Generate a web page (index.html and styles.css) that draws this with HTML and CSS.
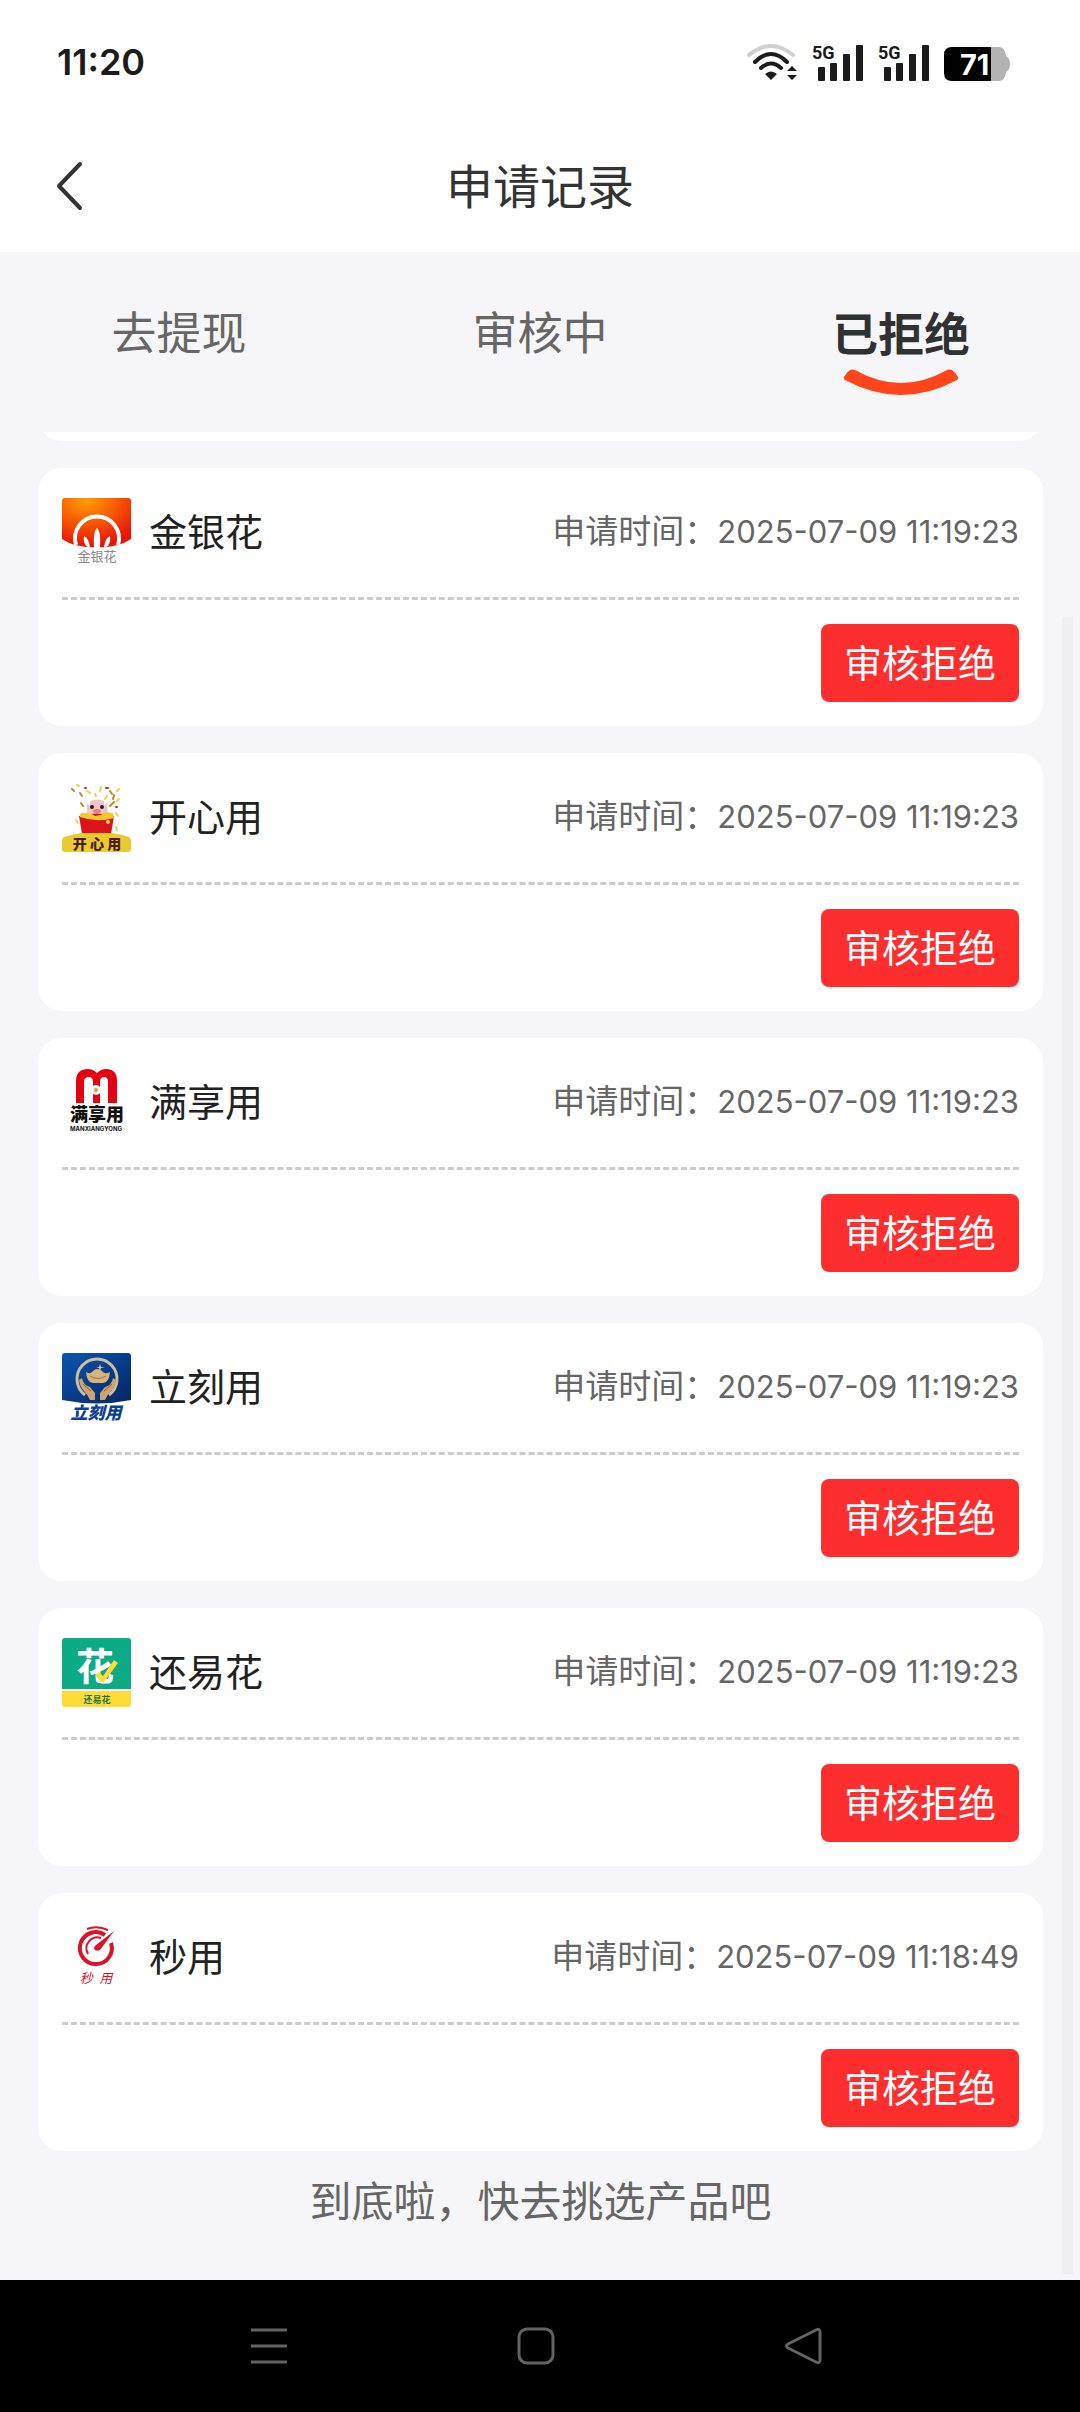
FILE: index.html
```html
<!DOCTYPE html>
<html lang="zh-CN">
<head>
    <meta charset="UTF-8">
    <meta name="viewport" content="width=device-width, initial-scale=1.0">
    <title>申请记录</title>
    <link rel="stylesheet" href="styles.css">
</head>
<body>

    <div class="status-bar">
        <span class="clock">11:20</span>
        <div class="status-icons">
            <svg class="wifi" width="52" height="38" viewBox="0 0 52 38" fill="none" stroke-linecap="round">
                <path d="M3 12Q25 -6 47 12" stroke="#d0d0d0" stroke-width="4"/>
                <path d="M9 19Q25 3 41 19" stroke="#1c1c1c" stroke-width="4"/>
                <path d="M15 25Q25 16 35 25" stroke="#1c1c1c" stroke-width="4"/>
                <path d="M19 31Q25 26 31 31L25 37Z" fill="#1c1c1c"/>
                <path d="M46 23L51 28H41ZM46 37L51 32H41Z" fill="#1c1c1c"/>
            </svg>
            <svg class="signal" width="52" height="38" viewBox="0 0 52 38" fill="#1c1c1c">
                <text class="net-text" x="0" y="16">5G</text>
                <rect x="6" y="24" width="7" height="14" rx="1"/>
                <rect x="18" y="20" width="7" height="18" rx="1"/>
                <rect x="31" y="11" width="7" height="27" rx="1"/>
                <rect x="44" y="2" width="7" height="36" rx="1"/>
            </svg>
            <svg class="signal" width="52" height="38" viewBox="0 0 52 38" fill="#1c1c1c">
                <text class="net-text" x="0" y="16">5G</text>
                <rect x="6" y="24" width="7" height="14" rx="1"/>
                <rect x="18" y="20" width="7" height="18" rx="1"/>
                <rect x="31" y="11" width="7" height="27" rx="1"/>
                <rect x="44" y="2" width="7" height="36" rx="1"/>
            </svg>
            <svg class="battery" width="66" height="38" viewBox="0 0 66 38">
                <path d="M47 4H55Q61 4 62 13Q66 15 66 21Q66 27 62 29Q61 38 55 38H47Z" fill="#b3b3b3"/>
                <path d="M8 4H47V38H8Q0 38 0 30V12Q0 4 8 4Z" fill="#000"/>
                <text class="battery-text" x="16" y="32">71</text>
            </svg>
        </div>
    </div>

    <header class="nav-bar">
        <button class="back-btn" aria-label="返回">
            <svg width="28" height="50" viewBox="0 0 28 50" fill="none" stroke="#333" stroke-width="4" stroke-linecap="round" stroke-linejoin="round"><path d="M24 3L3 25L24 47"/></svg>
        </button>
        <h1 class="nav-title">申请记录</h1>
    </header>

    <nav class="tabs">
        <button class="tab">去提现</button>
        <button class="tab">审核中</button>
        <button class="tab active">已拒绝
            <svg class="tab-smile" width="116" height="28" viewBox="0 0 116 28" fill="#ff4519"><path d="M7 1Q9 0 12 1Q58 27 104 1Q107 0 109 1Q113 4 115 8Q116 10 114 11Q58 41 2 11Q0 10 1 8Q3 4 7 1Z"/></svg>
        </button>
    </nav>

    <main class="list">
        <div class="scroll-thumb"></div>
        <div class="card-peek"><div class="card"></div></div>

        <article class="card">
            <div class="card-head">
                <svg class="logo" viewBox="0 0 69 69">
                    <defs>
                        <radialGradient id="jyh" cx="0.35" cy="0.05" r="0.9">
                            <stop offset="0" stop-color="#ff9d00"/>
                            <stop offset="0.5" stop-color="#f75a00"/>
                            <stop offset="1" stop-color="#e81405"/>
                        </radialGradient>
                    </defs>
                    <path d="M3 0H66Q69 0 69 3V41Q63 45 56 47Q35 52 13 47Q6 45 0 41V3Q0 0 3 0Z" fill="url(#jyh)"/>
                    <path d="M14 47A22 22 0 1 1 56 47" fill="none" stroke="#fff" stroke-width="4"/>
                    <path d="M35 30Q39 33 38 50H32Q31 33 35 30ZM22 38Q27 40 28 50L24 48Q21 43 22 38ZM48 38Q43 40 42 50L46 48Q49 43 48 38Z" fill="#fff"/>
                    <text class="logo-jyh" x="35" y="63" text-anchor="middle">金银花</text>
                </svg>
                <h2 class="name">金银花</h2>
                <p class="time">申请时间：<span class="date">2025-07-09 11:19:23</span></p>
            </div>
            <div class="card-foot"><button class="reject-btn">审核拒绝</button></div>
        </article>

        <article class="card">
            <div class="card-head">
                <svg class="logo" viewBox="0 0 69 69">
                    <g stroke-width="2" stroke-linecap="round">
                        <path d="M10 6L12 8M18 10L20 13M48 8L50 11M52 12L51 16M19 20L21 23M48 23L52 19" stroke="#b98a2c"/>
                        <path d="M15 2L17 3M25 8L28 10M39 4L38 8M55 8L57 6M57 16L55 18M14 37L16 40M54 30L56 33M54 44L55 47M33 11L34 13M45 13L43 16" stroke="#e9d34a"/>
                        <path d="M23 5H24M44 5H46M54 24H55" stroke="#d92d20"/>
                    </g>
                    <path d="M25 20L28 23V18Q35 15 42 18V23L45 20L46 32H25Z" fill="#f4c3c3"/>
                    <circle cx="30" cy="24" r="2" fill="#222"/>
                    <circle cx="40" cy="24" r="2" fill="#222"/>
                    <ellipse cx="35" cy="28" rx="4" ry="2" fill="#df7f86"/>
                    <path d="M17 33Q34 28 52 33L49 51H20Z" fill="#d9151b"/>
                    <path d="M18 34Q17 29 24 30L30 31L33 33L39 32L43 29L51 30L52 35Q35 40 18 34Z" fill="#f7c829"/>
                    <circle cx="46" cy="39" r="2" fill="#f9d65a"/>
                    <path d="M2 54Q12 51 20 50H50Q58 51 67 54Q69 55 69 58V66Q69 69 66 69H3Q0 69 0 66V58Q0 55 2 54Z" fill="#e9ca31"/>
                    <text class="logo-kxy" x="35" y="66" text-anchor="middle">开 心 用</text>
                </svg>
                <h2 class="name">开心用</h2>
                <p class="time">申请时间：<span class="date">2025-07-09 11:19:23</span></p>
            </div>
            <div class="card-foot"><button class="reject-btn">审核拒绝</button></div>
        </article>

        <article class="card">
            <div class="card-head">
                <svg class="logo" viewBox="0 0 69 69">
                    <path d="M14 35V13Q14 1 26 1Q31 1 35 5Q39 1 44 1Q55 1 55 13V35H46V14Q46 9 42 9Q38 9 38 14V35H31V14Q31 9 27 9Q22 9 22 14V35Z" fill="#e50012"/>
                    <circle cx="34" cy="22" r="5" fill="#fff"/>
                    <circle cx="34" cy="22" r="2" fill="#e5952d"/>
                    <text class="logo-mxy" x="35" y="53" text-anchor="middle">满享用</text>
                    <text class="logo-mxy-en" x="34" y="63" text-anchor="middle">MANXIANGYONG</text>
                </svg>
                <h2 class="name">满享用</h2>
                <p class="time">申请时间：<span class="date">2025-07-09 11:19:23</span></p>
            </div>
            <div class="card-foot"><button class="reject-btn">审核拒绝</button></div>
        </article>

        <article class="card">
            <div class="card-head">
                <svg class="logo" viewBox="0 0 69 69">
                    <defs>
                        <linearGradient id="lky" x1="0" y1="0" x2="1" y2="1">
                            <stop offset="0" stop-color="#0b56ad"/>
                            <stop offset="0.6" stop-color="#073884"/>
                            <stop offset="1" stop-color="#06265e"/>
                        </linearGradient>
                    </defs>
                    <path d="M3 0H66Q69 0 69 3V47Q35 54 0 47V3Q0 0 3 0Z" fill="url(#lky)"/>
                    <path d="M23 42A20 20 0 1 1 47 42" fill="none" stroke="#cbbf9f" stroke-width="3"/>
                    <path d="M24 19Q28 22 31 18Q35 14 40 18Q43 22 48 19Q47 30 41 30H31Q25 30 24 19Z" fill="#d9b47a"/>
                    <path d="M28 23Q36 28 44 23" fill="none" stroke="#a4713b"/>
                    <path d="M38 11L39 14L43 14L39 15L38 18L37 15L34 14L37 14Z" fill="#d7c7a0"/>
                    <path d="M17 27L20 25Q21 32 28 34L33 40V47H28Q26 42 22 38Q18 34 17 27ZM54 27L51 25Q50 32 43 34L38 40V47H43Q45 42 49 38Q53 34 54 27Z" fill="#cda46c"/>
                    <path d="M21 31L29 38M50 31L42 38" stroke="#8a5f34"/>
                    <text class="logo-lky" x="34" y="66" text-anchor="middle">立刻用</text>
                </svg>
                <h2 class="name">立刻用</h2>
                <p class="time">申请时间：<span class="date">2025-07-09 11:19:23</span></p>
            </div>
            <div class="card-foot"><button class="reject-btn">审核拒绝</button></div>
        </article>

        <article class="card">
            <div class="card-head">
                <svg class="logo" viewBox="0 0 69 69">
                    <path d="M3 0H66Q69 0 69 3V51H0V3Q0 0 3 0Z" fill="#0bab85"/>
                    <path d="M0 53H69V66Q69 69 66 69H3Q0 69 0 66Z" fill="#ffdb38"/>
                    <text class="logo-hua" x="33" y="42" text-anchor="middle">花</text>
                    <path d="M33 37L37 34L41 38L52 22L56 25L42 44H39Z" fill="#ffdb38"/>
                    <text class="logo-hyh" x="35" y="65" text-anchor="middle">还易花</text>
                </svg>
                <h2 class="name">还易花</h2>
                <p class="time">申请时间：<span class="date">2025-07-09 11:19:23</span></p>
            </div>
            <div class="card-foot"><button class="reject-btn">审核拒绝</button></div>
        </article>

        <article class="card">
            <div class="card-head">
                <svg class="logo" viewBox="0 0 69 69" fill="none" stroke="#d8142a">
                    <path d="M43 12A16 16 0 1 0 49 20" stroke-width="4"/>
                    <path d="M25 6Q35 2 46 7" stroke-width="2"/>
                    <path d="M26 31A11 11 0 0 1 39 15" stroke-width="2"/>
                    <path d="M52 8L38 27Q34 29 32 26Q32 23 34 22Z" fill="#d8142a" stroke="none"/>
                    <text class="logo-my" x="34" y="60" text-anchor="middle">秒&#8194;用</text>
                </svg>
                <h2 class="name">秒用</h2>
                <p class="time">申请时间：<span class="date">2025-07-09 11:18:49</span></p>
            </div>
            <div class="card-foot"><button class="reject-btn">审核拒绝</button></div>
        </article>

        <p class="list-end">到底啦，快去挑选产品吧</p>
    </main>

    <footer class="system-nav">
        <button aria-label="菜单">
            <svg width="38" height="38" viewBox="0 0 38 38" fill="none" stroke="#636363" stroke-width="3"><path d="M1 3H37M1 19H37M1 35H37"/></svg>
        </button>
        <button aria-label="主页">
            <svg width="38" height="38" viewBox="0 0 38 38" fill="none" stroke="#636363" stroke-width="3"><rect x="2" y="2" width="34" height="34" rx="8"/></svg>
        </button>
        <button aria-label="后退">
            <svg width="38" height="38" viewBox="0 0 38 38" fill="none" stroke="#636363" stroke-width="3" stroke-linejoin="round"><path d="M32 3Q36 1 36 5V33Q36 37 32 35L4 21Q1 19 4 17Z"/></svg>
        </button>
    </footer>

</body>
</html>
```
FILE: styles.css
```css
* {
    box-sizing: border-box;
    margin: 0;
    padding: 0;
}
body {
    display: flex;
    flex-direction: column;
    min-height: 100vh;
    background: #f6f6f8;
    color: #333;
    font-family: "Noto Sans CJK SC", sans-serif;
}
button {
    border: none;
    background: none;
    color: inherit;
    font-family: inherit;
    cursor: pointer;
}
svg {
    display: block;
    overflow: visible;
}

/* status bar */
.status-bar {
    display: flex;
    justify-content: space-between;
    align-items: center;
    height: 120px;
    padding: 4px 70px 0 57px;
    background: #fff;
}
.clock {
    font-family: Inter, sans-serif;
    font-size: 36px;
    font-weight: 600;
    color: #1c1c1c;
}
.status-icons {
    display: flex;
    gap: 14px;
}
.net-text {
    font-family: Roboto, sans-serif;
    font-size: 18px;
    font-weight: bold;
}
.battery-text {
    font-family: Inter, sans-serif;
    font-size: 29px;
    font-weight: bold;
    fill: #fff;
}

/* title */
.nav-bar {
    display: grid;
    grid-template-columns: 1fr auto 1fr;
    align-items: center;
    height: 132px;
    padding: 0 56px;
    background: #fff;
}
.back-btn {
    justify-self: start;
}
.nav-title {
    padding-bottom: 5px;
    font-size: 47px;
    line-height: 60px;
    font-weight: normal;
}

/* tabs */
.tabs {
    display: grid;
    grid-template-columns: repeat(3, 1fr);
    gap: 3px;
    height: 180px;
    padding-top: 49px;
}
.tab {
    display: flex;
    flex-direction: column;
    align-items: center;
    font-size: 45px;
    line-height: 60px;
    color: #666;
}
.tab.active {
    color: #303133;
    font-size: 46px;
    font-weight: bold;
}
.tab-smile {
    margin-top: 8px;
}

/* records */
.list {
    position: relative;
    flex: 1;
    display: flex;
    flex-direction: column;
    gap: 27px;
    padding: 0 37px 0 38px;
}
.scroll-thumb {
    position: absolute;
    top: 185px;
    right: 7px;
    bottom: 6px;
    width: 11px;
    background: #efeff2;
}
.card {
    flex: 1;
    padding: 0 24px 24px;
    background: #fff;
    border-radius: 24px;
}
.card-peek {
    display: flex;
    align-items: flex-end;
    height: 9px;
    overflow: hidden;
}
.card-peek .card {
    min-height: 60px;
}
.card-head {
    display: flex;
    align-items: center;
    height: 132px;
    border-bottom: 3px dashed #ccc;
}
.logo {
    width: 69px;
    height: 69px;
    margin-right: 18px;
}
.name {
    padding-bottom: 5px;
    font-size: 38px;
    line-height: 60px;
    font-weight: normal;
    color: #222;
}
.time {
    margin-left: auto;
    padding-bottom: 5px;
    font-size: 33px;
    line-height: 60px;
    color: #666;
}
.date {
    font-family: Inter, sans-serif;
    font-size: 31px;
}
.card-foot {
    display: flex;
    justify-content: flex-end;
    padding-top: 24px;
}
.reject-btn {
    height: 78px;
    padding: 0 23px 4px;
    border-radius: 8px;
    background: #ff2e2e;
    color: #fff;
    font-size: 38px;
    line-height: 60px;
}
.list-end {
    height: 102px;
    font-size: 42px;
    line-height: 42px;
    text-align: center;
    color: #666;
}

/* text inside the logos */
.logo-jyh {
    font-size: 13px;
    fill: #888;
}
.logo-kxy {
    font-size: 14px;
    font-weight: 900;
    fill: #4a1d08;
}
.logo-mxy {
    font-size: 18px;
    font-weight: 900;
    fill: #111;
}
.logo-mxy-en {
    font-family: Inter, sans-serif;
    font-size: 6px;
    font-weight: bold;
    fill: #111;
}
.logo-lky {
    font-size: 17px;
    font-weight: 900;
    font-style: italic;
    fill: #0b3f94;
}
.logo-hua {
    font-size: 38px;
    font-weight: bold;
    fill: #fff;
}
.logo-hyh {
    font-size: 9px;
    font-weight: bold;
    fill: #17753a;
}
.logo-my {
    font-size: 13px;
    font-style: italic;
    fill: #d8142a;
    stroke: none;
}

/* system navigation */
.system-nav {
    display: grid;
    grid-template-columns: repeat(3, 1fr);
    justify-items: center;
    align-items: center;
    height: 132px;
    padding: 0 143px 0 135px;
    background: #000;
}
```
